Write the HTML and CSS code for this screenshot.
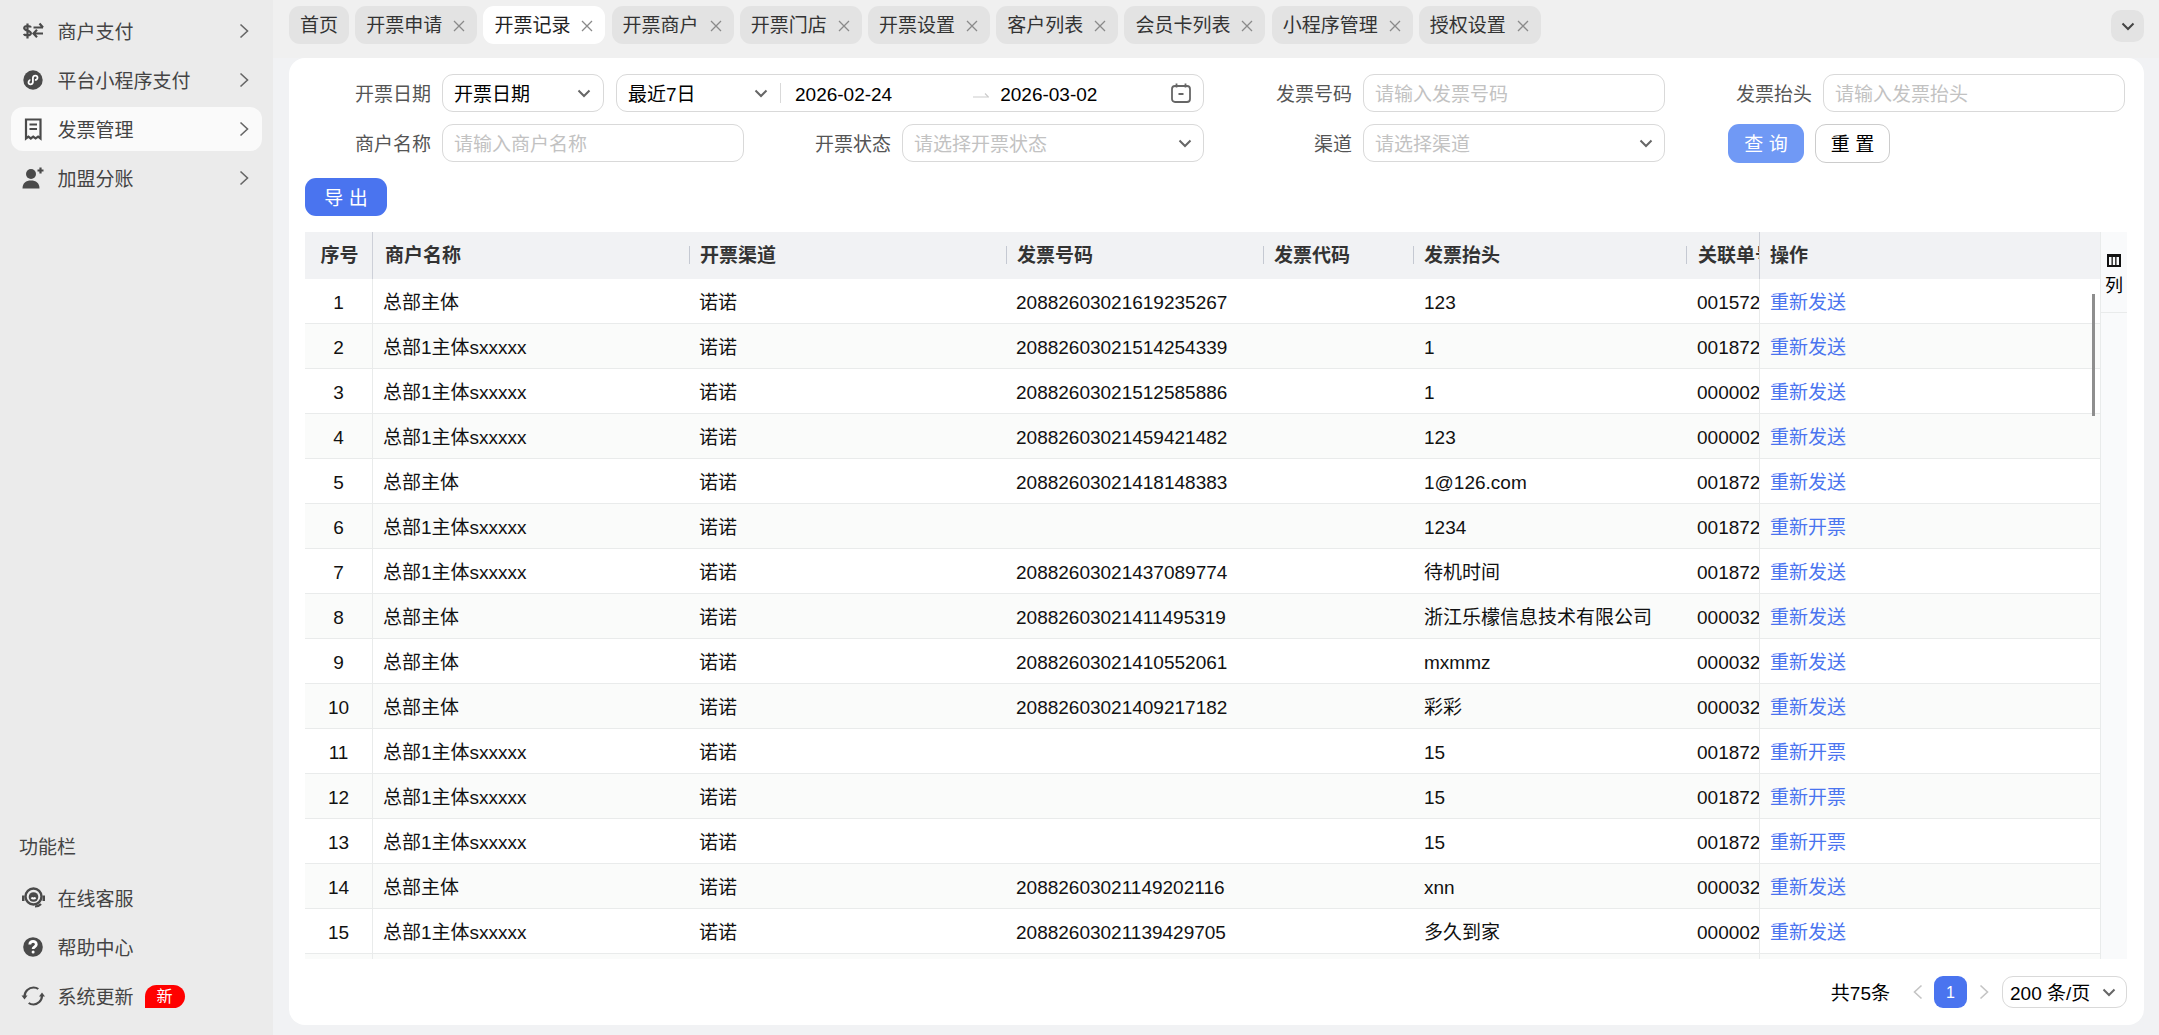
FILE: index.html
```html
<!DOCTYPE html>
<html lang="zh-CN">
<head>
<meta charset="utf-8">
<title>开票记录</title>
<link rel="stylesheet" href="styles.css">
</head>
<body>
<div class="app">
  <aside class="sidebar">
    <nav class="menu">
      <a class="menu-item">
        <svg class="menu-icon" viewBox="0 0 24 24"><path d="M9.800 8.500C9.200 6.600 3.400 6.300 3.200 9c-.2 3 6.800 2.200 6.700 5.300-.1 2.800-6.200 2.500-6.900.6M6.500 4.500v15" class="line"/><path d="M12.500 8.500H22M18.500 4.500l3.500 4M22 14.500h-9.500M16 10.800l-3.500 3.700 3.500 3.700" class="line"/></svg>
        <span class="menu-text">商户支付</span>
        <svg class="chev" viewBox="0 0 10 16"><path d="M1.500 1.500 8.500 8l-7 6.500"/></svg>
      </a>
      <a class="menu-item">
        <svg class="menu-icon" viewBox="0 0 24 24"><circle cx="12" cy="12" r="9.700" class="solid"/><path d="M7.500 14.500c.2 2.500 4 2.500 4.400-.3V9.800c.4-2.800 4.400-2.800 4.600-.3.100 1.900-1.600 2.400-2.600 2.300M9.400 12.200c-1-.1-1.800.8-1.900 2.300" class="white-line"/></svg>
        <span class="menu-text">平台小程序支付</span>
        <svg class="chev" viewBox="0 0 10 16"><path d="M1.500 1.500 8.500 8l-7 6.500"/></svg>
      </a>
      <a class="menu-item active">
        <svg class="menu-icon" viewBox="0 0 24 24"><path d="M5 2.500h14.500v19l-2.400-1.800-2.500 1.800-2.400-1.800-2.400 1.800-2.400-1.800L5 21.500z" class="line"/><path d="M8.500 7.500h7.500M8.500 12h7.500" class="line"/></svg>
        <span class="menu-text">发票管理</span>
        <svg class="chev" viewBox="0 0 10 16"><path d="M1.500 1.500 8.500 8l-7 6.500"/></svg>
      </a>
      <a class="menu-item">
        <svg class="menu-icon" viewBox="0 0 24 24"><circle cx="10" cy="8" r="5" class="solid"/><path d="M1.500 22.500c0-5.500 3.500-8 8.500-8s8.500 2.500 8.500 8z" class="solid"/><path d="M19.500 1.500v6M16.500 4.500h6" class="line"/></svg>
        <span class="menu-text">加盟分账</span>
        <svg class="chev" viewBox="0 0 10 16"><path d="M1.500 1.500 8.500 8l-7 6.500"/></svg>
      </a>
    </nav>
    <div class="tools">
      <div class="tools-title">功能栏</div>
      <a class="menu-item">
        <svg class="menu-icon" viewBox="0 0 24 24"><circle cx="12.500" cy="10.500" r="8" class="line-thick"/><circle cx="12.500" cy="11" r="4.800" class="solid"/><path d="M10.500 11.500c.6 1.300 3.400 1.300 4 0" class="white-line"/><path d="M1 9.500h2.500v5.500H1z" class="solid"/><path d="M21.500 9.500H24v5.500h-2.500z" class="solid"/><path d="M20 18c-1.500 1.700-4 2.500-6 2.500" class="line"/></svg>
        <span class="menu-text">在线客服</span>
      </a>
      <a class="menu-item">
        <svg class="menu-icon" viewBox="0 0 24 24"><circle cx="12" cy="12" r="9.800" class="solid"/><path d="M8.800 9.500c.1-4.100 6.500-4.100 6.500-.1 0 2.300-3.200 2.400-3.200 4.500" class="white-thick"/><circle cx="12.100" cy="17" r="1.500" class="white-fill"/></svg>
        <span class="menu-text">帮助中心</span>
      </a>
      <a class="menu-item">
        <svg class="menu-icon" viewBox="0 0 24 24"><path d="M3.500 12.500C3.500 7 8 3.500 12.500 3.500c2 0 3.500.5 4.800 1.500" class="line"/><path d="M21 11.500c0 5.500-4.500 9-8.500 9-2 0-3.500-.5-4.800-1.500" class="line"/><path d="M.5 11.500h6l-3 4z" class="solid"/><path d="M18 12.500h6l-3-4z" class="solid"/></svg>
        <span class="menu-text">系统更新</span>
        <span class="badge">新</span>
      </a>
    </div>
  </aside>

  <main class="main">
    <header class="tabbar">
      <div class="tabs">
        <span class="tab">首页</span>
        <span class="tab">开票申请<svg class="close" viewBox="0 0 12 12"><path d="M1 1l10 10M11 1 1 11"/></svg></span>
        <span class="tab current">开票记录<svg class="close" viewBox="0 0 12 12"><path d="M1 1l10 10M11 1 1 11"/></svg></span>
        <span class="tab">开票商户<svg class="close" viewBox="0 0 12 12"><path d="M1 1l10 10M11 1 1 11"/></svg></span>
        <span class="tab">开票门店<svg class="close" viewBox="0 0 12 12"><path d="M1 1l10 10M11 1 1 11"/></svg></span>
        <span class="tab">开票设置<svg class="close" viewBox="0 0 12 12"><path d="M1 1l10 10M11 1 1 11"/></svg></span>
        <span class="tab">客户列表<svg class="close" viewBox="0 0 12 12"><path d="M1 1l10 10M11 1 1 11"/></svg></span>
        <span class="tab">会员卡列表<svg class="close" viewBox="0 0 12 12"><path d="M1 1l10 10M11 1 1 11"/></svg></span>
        <span class="tab">小程序管理<svg class="close" viewBox="0 0 12 12"><path d="M1 1l10 10M11 1 1 11"/></svg></span>
        <span class="tab">授权设置<svg class="close" viewBox="0 0 12 12"><path d="M1 1l10 10M11 1 1 11"/></svg></span>
      </div>
      <button class="tab-more" type="button"><svg class="arrow-down dark" viewBox="0 0 14 9"><path d="M1.500 1.500 7 7l5.500-5.500"/></svg></button>
    </header>

    <section class="content">
      <div class="card">
        <form class="filters">
          <div class="field span-2">
            <label class="field-label">开票日期</label>
            <div class="control select date-type"><span class="value">开票日期</span><svg class="arrow-down" viewBox="0 0 14 9"><path d="M1.500 1.500 7 7l5.500-5.500"/></svg></div>
            <div class="control range">
              <span class="range-preset"><span class="value">最近7日</span><svg class="arrow-down" viewBox="0 0 14 9"><path d="M1.500 1.500 7 7l5.500-5.500"/></svg></span>
              <span class="range-start value">2026-02-24</span>
              <svg class="range-arrow" viewBox="0 0 16 6"><path d="M0 5h15.500L12 1.500"/></svg>
              <span class="range-end value">2026-03-02</span>
              <svg class="calendar" viewBox="0 0 20 20"><rect x="1" y="3" width="18" height="16" rx="3"/><path d="M5.500 .5v4M14.500 .5v4M7.500 11h5"/></svg>
            </div>
          </div>
          <div class="field">
            <label class="field-label">发票号码</label>
            <input class="control input" placeholder="请输入发票号码">
          </div>
          <div class="field">
            <label class="field-label">发票抬头</label>
            <input class="control input" placeholder="请输入发票抬头">
          </div>
          <div class="field">
            <label class="field-label">商户名称</label>
            <input class="control input" placeholder="请输入商户名称">
          </div>
          <div class="field col-2">
            <label class="field-label">开票状态</label>
            <div class="control select"><span class="placeholder">请选择开票状态</span><svg class="arrow-down" viewBox="0 0 14 9"><path d="M1.500 1.500 7 7l5.500-5.500"/></svg></div>
          </div>
          <div class="field">
            <label class="field-label">渠道</label>
            <div class="control select"><span class="placeholder">请选择渠道</span><svg class="arrow-down" viewBox="0 0 14 9"><path d="M1.500 1.500 7 7l5.500-5.500"/></svg></div>
          </div>
          <div class="field actions">
            <button class="btn btn-query" type="button">查 询</button>
            <button class="btn btn-reset" type="button">重 置</button>
          </div>
        </form>

        <div class="toolbar"><button class="btn btn-export" type="button">导 出</button></div>

        <div class="table-area">
          <div class="table-wrap">
            <table class="grid">
              <colgroup>
                <col class="c-index"><col class="c-name"><col class="c-channel"><col class="c-no"><col class="c-code"><col class="c-title"><col class="c-order"><col class="c-op">
              </colgroup>
              <thead>
                <tr>
                  <th class="center fixed-left">序号</th><th class="first-col">商户名称</th><th class="sep">开票渠道</th><th class="sep">发票号码</th><th class="sep">发票代码</th><th class="sep">发票抬头</th><th class="sep order-head">关联单号</th><th class="fixed-right">操作</th>
                </tr>
              </thead>
              <tbody>
                <tr><td class="center fixed-left">1</td><td>总部主体</td><td>诺诺</td><td>20882603021619235267</td><td></td><td class="title">123</td><td class="order">001572</td><td class="fixed-right"><a class="link">重新发送</a></td></tr>
                <tr><td class="center fixed-left">2</td><td>总部1主体sxxxxx</td><td>诺诺</td><td>20882603021514254339</td><td></td><td class="title">1</td><td class="order">001872</td><td class="fixed-right"><a class="link">重新发送</a></td></tr>
                <tr><td class="center fixed-left">3</td><td>总部1主体sxxxxx</td><td>诺诺</td><td>20882603021512585886</td><td></td><td class="title">1</td><td class="order">000002</td><td class="fixed-right"><a class="link">重新发送</a></td></tr>
                <tr><td class="center fixed-left">4</td><td>总部1主体sxxxxx</td><td>诺诺</td><td>20882603021459421482</td><td></td><td class="title">123</td><td class="order">000002</td><td class="fixed-right"><a class="link">重新发送</a></td></tr>
                <tr><td class="center fixed-left">5</td><td>总部主体</td><td>诺诺</td><td>20882603021418148383</td><td></td><td class="title">1@126.com</td><td class="order">001872</td><td class="fixed-right"><a class="link">重新发送</a></td></tr>
                <tr><td class="center fixed-left">6</td><td>总部1主体sxxxxx</td><td>诺诺</td><td></td><td></td><td class="title">1234</td><td class="order">001872</td><td class="fixed-right"><a class="link">重新开票</a></td></tr>
                <tr><td class="center fixed-left">7</td><td>总部1主体sxxxxx</td><td>诺诺</td><td>20882603021437089774</td><td></td><td class="title">待机时间</td><td class="order">001872</td><td class="fixed-right"><a class="link">重新发送</a></td></tr>
                <tr><td class="center fixed-left">8</td><td>总部主体</td><td>诺诺</td><td>20882603021411495319</td><td></td><td class="title">浙江乐檬信息技术有限公司</td><td class="order">000032</td><td class="fixed-right"><a class="link">重新发送</a></td></tr>
                <tr><td class="center fixed-left">9</td><td>总部主体</td><td>诺诺</td><td>20882603021410552061</td><td></td><td class="title">mxmmz</td><td class="order">000032</td><td class="fixed-right"><a class="link">重新发送</a></td></tr>
                <tr><td class="center fixed-left">10</td><td>总部主体</td><td>诺诺</td><td>20882603021409217182</td><td></td><td class="title">彩彩</td><td class="order">000032</td><td class="fixed-right"><a class="link">重新发送</a></td></tr>
                <tr><td class="center fixed-left">11</td><td>总部1主体sxxxxx</td><td>诺诺</td><td></td><td></td><td class="title">15</td><td class="order">001872</td><td class="fixed-right"><a class="link">重新开票</a></td></tr>
                <tr><td class="center fixed-left">12</td><td>总部1主体sxxxxx</td><td>诺诺</td><td></td><td></td><td class="title">15</td><td class="order">001872</td><td class="fixed-right"><a class="link">重新开票</a></td></tr>
                <tr><td class="center fixed-left">13</td><td>总部1主体sxxxxx</td><td>诺诺</td><td></td><td></td><td class="title">15</td><td class="order">001872</td><td class="fixed-right"><a class="link">重新开票</a></td></tr>
                <tr><td class="center fixed-left">14</td><td>总部主体</td><td>诺诺</td><td>20882603021149202116</td><td></td><td class="title">xnn</td><td class="order">000032</td><td class="fixed-right"><a class="link">重新发送</a></td></tr>
                <tr><td class="center fixed-left">15</td><td>总部1主体sxxxxx</td><td>诺诺</td><td>20882603021139429705</td><td></td><td class="title">多久到家</td><td class="order">000002</td><td class="fixed-right"><a class="link">重新发送</a></td></tr>
                <tr><td class="fixed-left"></td><td></td><td></td><td></td><td></td><td></td><td></td><td class="fixed-right"></td></tr>
              </tbody>
            </table>
            <span class="scroll-thumb"></span>
          </div>
          <aside class="col-setting">
            <div class="col-setting-head">
              <svg class="col-icon" viewBox="0 0 14 13"><path d="M0 0h14v13H0z" class="col-bg"/><path d="M2 3h2.500v8H2zM5.800 3h2.400v8H5.800zM9.500 3H12v8H9.500z" class="col-gap"/></svg>
              <span class="col-text">列</span>
            </div>
          </aside>
        </div>

        <footer class="pager">
          <span class="pager-total">共75条</span>
          <svg class="pager-arrow" viewBox="0 0 10 16"><path d="M8.500 1.500 1.500 8l7 6.500"/></svg>
          <span class="pager-page">1</span>
          <svg class="pager-arrow" viewBox="0 0 10 16"><path d="M1.500 1.500 8.500 8l-7 6.500"/></svg>
          <span class="pager-size"><span class="pager-size-text">200 条/页</span><svg class="arrow-down" viewBox="0 0 14 9"><path d="M1.500 1.500 7 7l5.500-5.500"/></svg></span>
        </footer>
      </div>
    </section>
  </main>
</div>
</body>
</html>
```
FILE: styles.css
```css
* { box-sizing: border-box; }
html, body { height: 100%; }
body {
  margin: 0;
  overflow: hidden;
  font-family: "Liberation Sans", "Noto Sans CJK SC", sans-serif;
  font-size: 19px;
  line-height: 0;
  color: #000;
  background: #f0f0f0;
}
button, input { font: inherit; }
svg { display: block; flex: none; }

.app { display: flex; height: 1035px; }

/* sidebar */
.sidebar {
  width: 273px;
  flex: none;
  display: flex;
  flex-direction: column;
  justify-content: space-between;
  padding: 9px 11px 17px;
  background: #ebebeb;
}
.menu, .tools { display: flex; flex-direction: column; gap: 5px; }
.menu-item {
  height: 44px;
  display: flex;
  align-items: center;
  padding: 0 13px 0 10px;
  border-radius: 12px;
  color: #444;
}
.menu-item.active { background: #fafafa; }
.menu-icon { width: 24px; height: 24px; margin-right: 12.500px; }
.menu-text { flex: 1; padding-top: 3px; white-space: nowrap; }
.tools .menu-text { flex: none; }
.line { fill: none; stroke: #4a4a4a; stroke-width: 2.200; }
.line-thick { fill: none; stroke: #4a4a4a; stroke-width: 2.400; }
.solid { fill: #4a4a4a; }
.white-line { fill: none; stroke: #fff; stroke-width: 1.800; }
.white-thick { fill: none; stroke: #fff; stroke-width: 2.800; }
.white-fill { fill: #fff; }
.chev { width: 10px; height: 16px; }
.chev path, .pager-arrow path { fill: none; stroke: #666; stroke-width: 1.600; }
.tools-title {
  display: flex;
  align-items: center;
  height: 28px;
  margin: 0 0 10px 8px;
  padding-top: 2px;
  color: #444;
}
.badge {
  width: 40px;
  height: 23px;
  margin-left: 11px;
  display: flex;
  align-items: center;
  justify-content: center;
  padding-top: 2px;
  background: #f00;
  border-radius: 12px 12px 12px 0;
  color: #fff;
  font-size: 16px;
}

/* main */
.main { flex: 1; min-width: 0; display: flex; flex-direction: column; }
.tabbar {
  height: 58px;
  flex: none;
  display: flex;
  justify-content: space-between;
  padding: 6px 15px 0 16px;
}
.tabs { display: flex; gap: 6.200px; }
.tab {
  height: 38px;
  display: flex;
  align-items: center;
  padding: 1px 11px 0;
  border-radius: 11px;
  background: #e3e3e3;
  color: #333;
  white-space: nowrap;
}
.tab.current { background: #fff; color: #222; }
.close { width: 12px; height: 12px; margin: 0 1px 0 11px; }
.close path { fill: none; stroke: #8a8a8a; stroke-width: 1.300; }
.tab-more {
  width: 33px;
  height: 32px;
  margin-top: 4px;
  padding: 0;
  display: flex;
  align-items: center;
  justify-content: center;
  border: 0;
  border-radius: 10px;
  background: #e3e3e3;
}

.content {
  flex: 1;
  min-height: 0;
  padding: 0 15px 10px 16px;
  background: #f1f2f4;
}
.card {
  height: 100%;
  display: flex;
  flex-direction: column;
  padding: 16px 17px 17px 16px;
  border-radius: 16px;
  background: #fff;
}

/* filters */
.filters {
  display: grid;
  grid-template-columns: 440px 441px 440px 440px;
  column-gap: 20px;
  row-gap: 12px;
  margin-left: -1px;
  padding-bottom: 16px;
}
.field { display: flex; align-items: center; height: 38px; }
.span-2 { grid-column: span 2; padding-right: 1px; }
.col-2 { padding-right: 1px; }
.field-label {
  width: 127px;
  flex: none;
  margin-right: 11px;
  padding-top: 3px;
  color: #555;
  text-align: right;
  white-space: nowrap;
}
.control {
  height: 38px;
  min-width: 0;
  flex: 1;
  display: flex;
  align-items: center;
  justify-content: space-between;
  padding: 0 11px;
  border: 1px solid #d9d9d9;
  border-radius: 11px;
  background: #fff;
  color: #000;
  outline: 0;
}
.input { line-height: 26px; padding-top: 4px; }
.input::placeholder { color: #c2c2c2; opacity: 1; }
.placeholder { padding-top: 3px; color: #c2c2c2; }
.value { padding-top: 3px; color: #000; white-space: nowrap; }
.arrow-down { width: 14px; height: 9px; }
.arrow-down path { fill: none; stroke: #666; stroke-width: 2; }
.arrow-down.dark path { stroke: #444; }
.date-type { flex: none; width: 162px; margin-right: 12px; padding-right: 12px; }
.range { justify-content: flex-start; padding-right: 12px; }
.range-preset {
  width: 153px;
  flex: none;
  display: flex;
  align-items: center;
  justify-content: space-between;
  padding-right: 12px;
  border-right: 1px solid #d9d9d9;
  margin-right: 14px;
  height: 20px;
}
.range-arrow { width: 16px; height: 6px; margin: 4px 11px 0 81px; }
.range-arrow path { fill: none; stroke: #ccc; stroke-width: 1.200; }
.calendar { width: 20px; height: 20px; margin-left: auto; }
.calendar rect, .calendar path { fill: none; stroke: #666; stroke-width: 1.800; }
.actions { padding-left: 43px; gap: 11px; }
.btn {
  height: 39px;
  padding: 3px 0 0;
  border: 0;
  border-radius: 11px;
  white-space: nowrap;
}
.btn-query { width: 76px; background: #7099f5; color: #fff; }
.btn-reset { width: 75px; border: 1px solid #ccc; background: #fff; color: #000; }
.toolbar { flex: none; padding-bottom: 16px; }
.btn-export { display: block; width: 82px; height: 38px; background: #4a74ef; color: #fff; }

/* table */
.table-area {
  flex: 1;
  min-height: 0;
  display: flex;
  width: 1822px;
  overflow: hidden;
}
.table-wrap { position: relative; width: 1795px; flex: none; overflow: hidden; }
.grid {
  width: 1795px;
  table-layout: fixed;
  border-collapse: separate;
  border-spacing: 0;
}
.c-index { width: 68px; }
.c-name { width: 316px; }
.c-channel { width: 317px; }
.c-no { width: 257px; }
.c-code { width: 150px; }
.c-title { width: 273px; }
.c-order { width: 73px; }
.c-op { width: 341px; }
.grid th, .grid td {
  padding: 1px 11px 0;
  text-align: left;
  white-space: nowrap;
  overflow: hidden;
}
.grid th {
  position: relative;
  height: 47px;
  background: #f1f2f4;
  color: #333;
  font-weight: 700;
}
.grid td {
  height: 45px;
  padding-top: 3px;
  padding-left: 10px;
  border-bottom: 1px solid #e9ebeb;
  color: #111;
}
.grid tbody tr:nth-child(even) td { background: #fafbfa; }
.grid .center { text-align: center; padding-left: 0; padding-right: 0; }
.grid th.center { padding-left: 2px; }
.grid th.first-col { padding-left: 12px; }
.grid th.order-head { padding-left: 12px; padding-right: 0; }
.grid td.title { padding-left: 11px; }
.grid td.order { padding-left: 11px; padding-right: 0; }
.grid th.fixed-left { border-right: 1px solid #cdd0d8; }
.grid td.fixed-left { border-right: 1px solid #e9ebeb; }
.grid th.fixed-right { border-left: 1px solid #cdd0d8; padding-left: 10px; }
.grid td.fixed-right { border-left: 1px solid #e9ebeb; padding-left: 10px; }
.grid th.sep::before {
  content: "";
  position: absolute;
  left: 0;
  top: 14px;
  width: 1px;
  height: 18px;
  background: #c5c9d2;
}
.link { color: #4a74ef; }
.scroll-thumb {
  position: absolute;
  top: 62px;
  right: 5px;
  width: 3px;
  height: 122px;
  background: #8e8e8e;
}
.col-setting {
  width: 27px;
  flex: none;
  border-left: 1px solid #e9ebeb;
  background: #f9fafb;
}
.col-setting-head {
  height: 81px;
  display: flex;
  flex-direction: column;
  align-items: center;
  padding-top: 22px;
  border-bottom: 1px solid #e9ebeb;
}
.col-icon { width: 14px; height: 13px; }
.col-bg { fill: #111; }
.col-gap { fill: #f9fafb; }
.col-text { margin-top: 19px; font-size: 18px; color: #000; }

/* pagination */
.pager {
  flex: none;
  display: flex;
  align-items: center;
  justify-content: flex-end;
  height: 32px;
  margin-top: 17px;
}
.pager-total { margin-right: 23px; padding-top: 3px; white-space: nowrap; }
.pager-arrow { width: 10px; height: 16px; }
.pager-arrow path { stroke: #c4c4c4; stroke-width: 1.600; }
.pager-page {
  width: 33px;
  height: 32px;
  margin: 0 12px 0 11px;
  display: flex;
  align-items: center;
  justify-content: center;
  padding-top: 2px;
  border-radius: 9px;
  background: #4a74ef;
  color: #fff;
  font-size: 16px;
}
.pager-size {
  width: 125px;
  height: 32px;
  margin-left: 13px;
  display: flex;
  align-items: center;
  justify-content: space-between;
  padding: 0 10px 0 7px;
  border: 1px solid #d9d9d9;
  border-radius: 11px;
  white-space: nowrap;
}
.pager-size-text { padding-top: 3px; }
```
